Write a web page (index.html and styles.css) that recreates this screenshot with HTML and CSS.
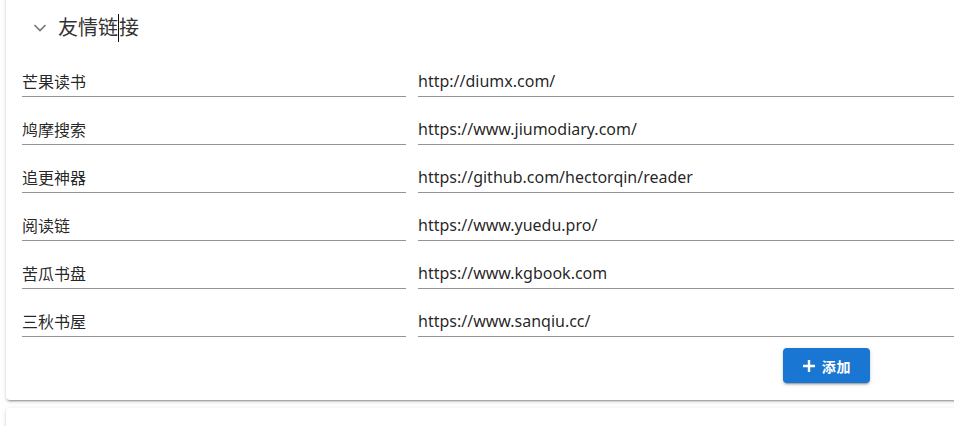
FILE: index.html
```html
<!DOCTYPE html>
<html>
<head>
  <meta charset="utf-8">
  <title>友情链接</title>
  <link rel="stylesheet" href="styles.css">
</head>
<body>
  <div class="panel">
    <div class="panel-header">
      <svg class="chevron" width="14" height="12" viewBox="0 0 14 12">
        <polyline points="1.5,3 7,8.5 12.5,3" fill="none" stroke="#757575" stroke-width="1.6"/>
      </svg>
      <h2>友情链<span class="caret"></span>接</h2>
    </div>

    <div class="links">
      <input class="field" value="芒果读书" />
      <input class="field" value="http://diumx.com/" />
      <input class="field" value="鸠摩搜索" />
      <input class="field" value="https://www.jiumodiary.com/" />
      <input class="field" value="追更神器" />
      <input class="field" value="https://github.com/hectorqin/reader" />
      <input class="field" value="阅读链" />
      <input class="field" value="https://www.yuedu.pro/" />
      <input class="field" value="苦瓜书盘" />
      <input class="field" value="https://www.kgbook.com" />
      <input class="field" value="三秋书屋" />
      <input class="field" value="https://www.sanqiu.cc/" />
    </div>

    <div class="actions">
      <button type="button" class="add-btn">
        <svg width="14" height="14" viewBox="0 0 14 14">
          <path d="M7 1v12M1 7h12" stroke="#fff" stroke-width="2.4"/>
        </svg>
        添加
      </button>
    </div>
  </div>

  <div class="panel next"></div>
</body>
</html>
```

FILE: styles.css
```css
* {
  margin: 0;
  padding: 0;
  box-sizing: border-box;
}

body {
  font-family: "Noto Sans", "Noto Sans CJK SC", sans-serif;
  background: #fff;
  color: rgba(0, 0, 0, 0.87);
  overflow: hidden;
  height: 426px;
}

.panel {
  width: 964px;
  margin-left: 6px;
  margin-top: -9px;
  background: #fff;
  border-radius: 4px;
  box-shadow: 0 3px 1px -2px rgba(0, 0, 0, 0.2), 0 2px 2px 0 rgba(0, 0, 0, 0.14), 0 1px 5px 0 rgba(0, 0, 0, 0.12);
}

.panel.next {
  margin-top: 8px;
  height: 60px;
}

.panel-header {
  height: 74px;
  padding-left: 27px;
  display: flex;
  align-items: center;
  gap: 11px;
}

.chevron {
  display: block;
}

.panel-header h2 {
  font-size: 20px;
  font-weight: 400;
  color: #333;
  line-height: 28px;
}

.caret {
  display: inline-block;
  width: 0;
  height: 28px;
  border-left: 1px solid #111;
  vertical-align: -7px;
}

.links {
  display: grid;
  grid-template-columns: 384px 1fr;
  column-gap: 12px;
  row-gap: 16px;
  padding: 0 16px;
}

.field {
  display: block;
  width: 100%;
  height: 32px;
  border: none;
  border-bottom: 1px solid #949494;
  outline: none;
  background: transparent;
  font-family: "Noto Sans", "Noto Sans CJK SC", sans-serif;
  font-size: 16px;
  color: rgba(0, 0, 0, 0.87);
  padding: 1px 0 0 0;
}

.actions {
  display: flex;
  justify-content: flex-end;
  padding: 11px 100px 17px 0;
}

.add-btn {
  height: 35px;
  width: 87px;
  display: flex;
  align-items: center;
  justify-content: center;
  gap: 6px;
  background: #1976d2;
  color: #fff;
  border: none;
  border-radius: 4px;
  font-family: "Noto Sans", "Noto Sans CJK SC", sans-serif;
  font-size: 14px;
  font-weight: 700;
  letter-spacing: 0.06em;
  box-shadow: 0 3px 1px -2px rgba(0, 0, 0, 0.2), 0 2px 2px 0 rgba(0, 0, 0, 0.14), 0 1px 5px 0 rgba(0, 0, 0, 0.12);
  cursor: pointer;
}
```
